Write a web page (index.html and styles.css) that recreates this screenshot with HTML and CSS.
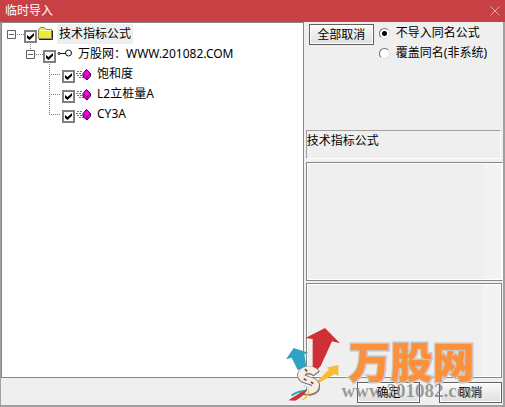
FILE: index.html
```html
<!DOCTYPE html>
<html lang="zh-CN">
<head>
  <meta charset="UTF-8">
  <meta name="viewport" content="width=device-width, initial-scale=1.0">
  <title>临时导入</title>
  <link rel="stylesheet" href="styles.css">
</head>
<body>
  <div class="window">
    <header class="titlebar">
      <h1>临时导入</h1>
      <button class="close" type="button" aria-label="关闭">
        <svg width="10" height="10" viewBox="0 0 10 10"><path d="M.5 .5l9 9M9.5 .5l-9 9"/></svg>
      </button>
    </header>

    <main class="main">
      <ul class="tree">
        <li>
          <div class="row">
            <svg class="guide" width="17" height="20" viewBox="0 0 17 20">
              <path class="box" d="M.5 6.500h8v8h-8zM2 10.500h5"/>
              <path class="dots" d="M10 10.500h7"/>
            </svg>
            <input type="checkbox" id="root" checked>
            <svg class="icon" width="15" height="20" viewBox="0 0 15 20">
              <path d="M.5 14.500v-9l2-2h4l2 2h5v9z" fill="#eeea3c" stroke="#8f8f60"/>
              <path d="M1 15.500h13.500v-9" fill="none" stroke="#222"/>
              <path d="M2 6.500h11" stroke="#fffcb0"/>
            </svg>
            <label class="selected" for="root">技术指标公式</label>
          </div>
          <ul>
            <li>
              <div class="row">
                <svg class="guide" width="17" height="20" viewBox="0 0 17 20">
                  <path class="box" d="M.5 6.500h8v8h-8zM2 10.500h5"/>
                  <path class="dots" d="M10 10.500h7M4.500 0v6"/>
                </svg>
                <input type="checkbox" id="site" checked>
                <svg class="icon" width="15" height="20" viewBox="0 0 15 20" fill="none" stroke="#111">
                  <circle cx="2" cy="9.500" r="1"/>
                  <path d="M3 9.500h6"/>
                  <circle cx="11.500" cy="9" r="3"/>
                </svg>
                <label for="site">万股网：WWW.201082.COM</label>
              </div>
              <ul>
                <li class="row">
                  <svg class="guide" width="17" height="20" viewBox="0 0 17 20"><path class="dots" d="M4.500 0v20M4 10.500h12"/></svg>
                  <input type="checkbox" id="f1" checked>
                  <svg class="icon" width="15" height="20" viewBox="0 0 15 20"><use href="#gem"/></svg>
                  <label for="f1">饱和度</label>
                </li>
                <li class="row">
                  <svg class="guide" width="17" height="20" viewBox="0 0 17 20"><path class="dots" d="M4.500 0v20M4 10.500h12"/></svg>
                  <input type="checkbox" id="f2" checked>
                  <svg class="icon" width="15" height="20" viewBox="0 0 15 20"><use href="#gem"/></svg>
                  <label for="f2">L2立桩量A</label>
                </li>
                <li class="row">
                  <svg class="guide" width="17" height="20" viewBox="0 0 17 20"><path class="dots" d="M4.500 0v11M4 10.500h12"/></svg>
                  <input type="checkbox" id="f3" checked>
                  <svg class="icon" width="15" height="20" viewBox="0 0 15 20"><use href="#gem"/></svg>
                  <label for="f3">CY3A</label>
                </li>
              </ul>
            </li>
          </ul>
        </li>
      </ul>

      <section class="side">
        <div class="options">
          <button class="btn" type="button">全部取消</button>
          <div class="radios">
            <div class="radio">
              <input type="radio" name="mode" id="skip" checked>
              <label for="skip">不导入同名公式</label>
            </div>
            <div class="radio">
              <input type="radio" name="mode" id="cover">
              <label for="cover">覆盖同名(非系统)</label>
            </div>
          </div>
        </div>
        <div class="name">技术指标公式</div>
        <textarea class="memo" aria-label="公式说明" readonly></textarea>
        <textarea class="memo note" aria-label="公式备注" readonly></textarea>
      </section>
    </main>

    <footer class="footer">
      <button class="btn" type="button">确定</button>
      <button class="btn" type="button">取消</button>
    </footer>

    <div class="watermark">
      <svg width="55" height="76" viewBox="45 18 165 228">
        <path d="M162 24l45 46-24-6-34 74-24 26V57l-22-3z" fill="#cf3038"/>
        <path d="M45 118l23-34 44 14-12 5 6 38-26 9-18-37z" fill="#2fa3c4"/>
        <path d="M136 186l38-38-8-5 36-8 0 33-10-6-42 23z" fill="#f6bd35"/>
        <path d="M137 162c-14-18-46-12-46 4 0 19 44 12 44 32 0 18-28 22-44 10" fill="none" stroke="#83766a" stroke-width="25"/>
        <path d="M135 159c-14-17-44-11-44 6 0 19 43 13 43 31 0 17-28 20-43 10" fill="none" stroke="#f4eee6" stroke-width="20"/>
        <path d="M102 147l6 7M98 176l8 5M120 186l7 5" stroke="#5e4c40" stroke-width="5"/>
        <path d="M60 224q18-14 44-15l4-10v14q-25 3-44 16z" fill="#2fa3c4"/>
        <path d="M52 241q26-18 58-34-13 24-38 35z" fill="#cf3038"/>
        <path d="M90 240q22-10 23-34 8 22-16 34z" fill="#f6bd35"/>
      </svg>
      <div class="brand">
        <strong>万股网</strong>
        <span>www.201082.com</span>
      </div>
    </div>
  </div>

  <svg width="0" height="0" class="defs">
    <defs>
      <g id="gem">
        <path d="M1 7.500h5M0 9.500h6M1 11.500h6M3 13.500h5" stroke="#777" stroke-dasharray="2 1"/>
        <path d="M10.500 5.500l4 4v2.500l-3.500 4-4-3.500v-3z" fill="#f0e" stroke="#300030"/>
        <path d="M7.500 10l3.500 3 3-3.500M11 13v2.500" fill="none" stroke="#800080"/>
      </g>
    </defs>
  </svg>
</body>
</html>
```
FILE: styles.css
```css
* {
  box-sizing: border-box;
}

body {
  margin: 0;
  font-family: "Noto Sans", "Noto Sans CJK SC", sans-serif;
  font-size: 12px;
  line-height: 20px;
  color: #000;
}

.window {
  position: relative;
  display: flex;
  flex-direction: column;
  height: 100vh;
  background: #efefef;
  border: 2px solid #a0a0a0;
  border-width: 0 2px 2px 1px;
}

.titlebar {
  display: flex;
  justify-content: space-between;
  align-items: center;
  height: 22px;
  margin: 0 -2px 0 -1px;
  padding: 0 5px;
  background: #c84044;
  color: #fff;
}

h1 {
  margin: 0;
  font-size: 12px;
  font-weight: normal;
}

.close {
  display: flex;
  padding: 0;
  border: 0;
  background: none;
}

.close path {
  stroke: #e8a8aa;
}

.main {
  flex: 1;
  display: flex;
  min-height: 0;
}

/* tree */
ul {
  list-style: none;
  margin: 0;
  padding: 0;
}

ul ul {
  padding-left: 19px;
}

.tree {
  flex: 3;
  padding: 1px 0 0 5px;
  background: #fff;
  border: 1px solid #868686;
}

.row {
  display: flex;
  align-items: center;
  height: 20px;
}

.row label {
  padding: 0 2px;
  margin-left: 4px;
}

.row .selected {
  background: #efefef;
}

.guide path {
  fill: none;
  stroke: #808080;
}

.guide .box {
  stroke: #606060;
}

.guide .dots {
  stroke-dasharray: 1 1;
}

input {
  appearance: none;
  margin: 0;
  background: #fff;
}

input[type="checkbox"] {
  width: 13px;
  height: 13px;
  margin-top: 5px;
  border: 2px solid #808080;
}

input[type="checkbox"]:checked::before {
  content: "";
  display: block;
  width: 7px;
  height: 7px;
  margin: 1px;
  background: #000;
  clip-path: polygon(0 28%, 36% 58%, 100% 0, 100% 40%, 36% 100%, 0 70%);
}

.icon {
  margin-left: 1px;
}

/* right side */
.side {
  flex: 2;
  display: flex;
  flex-direction: column;
  padding-left: 2px;
}

.options {
  flex: 1;
  display: flex;
  align-items: flex-start;
  gap: 5px;
  padding: 2px 3px;
}

.btn {
  width: 65px;
  height: 21px;
  padding: 0;
  border: 1px solid #606060;
  box-shadow: inset 0 0 0 1px #fff;
  background: linear-gradient(#fafafa, #dedede);
  font: inherit;
  line-height: 18px;
}

.radio {
  display: flex;
  align-items: center;
  gap: 6px;
  height: 20px;
}

.radios {
  margin-top: -1px;
}

input[type="radio"] {
  width: 11px;
  height: 11px;
  border: 1px solid;
  border-color: #707070 #e0e0e0 #e0e0e0 #707070;
  border-radius: 50%;
}

input[type="radio"]:checked {
  background: radial-gradient(circle, #000 2px, #fff 3px);
}

.name {
  height: 29px;
  margin-right: 2px;
  border: 1px solid;
  border-color: #a0a0a0 #fff #fff #a0a0a0;
}

.memo {
  height: 119px;
  margin: 3px 0 2px;
  resize: none;
  border: 1px solid #868686;
  border-right-color: #fff;
  box-shadow: inset 0 0 0 1px #fff;
  background: linear-gradient(to left, #f4f3f1 18px, #efefef 18px);
}

.note {
  height: 95px;
  margin: 0 1px 0 0;
  border-right-color: #868686;
}

.footer {
  display: flex;
  justify-content: flex-end;
  gap: 19px;
  padding: 4px 1px 2px;
}

.footer .btn {
  width: 63px;
}

/* site mark over the lower right corner */
.watermark {
  position: absolute;
  right: 21px;
  bottom: 3px;
  display: flex;
  gap: 1px;
  pointer-events: none;
}

.brand {
  display: flex;
  flex-direction: column;
  align-items: center;
  padding-top: 13px;
}

.brand strong {
  font-family: "Noto Sans CJK SC", sans-serif;
  font-size: 42px;
  font-weight: 900;
  line-height: 42px;
  color: #fd913b;
  -webkit-text-stroke: 3px #c9c4be;
  paint-order: stroke fill;
}

.brand span {
  font: bold 19px/20px "Liberation Serif", serif;
  color: rgba(125, 125, 125, 0.75);
}

.defs {
  position: absolute;
}
```
